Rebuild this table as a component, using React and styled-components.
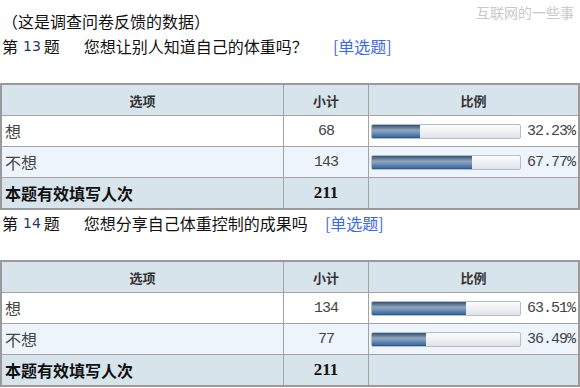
import React from "react";
import styled, { createGlobalStyle } from "styled-components";

const Global = createGlobalStyle`
  html, body { margin: 0; padding: 0; background: #fff; }
  body { font-family: "Noto Sans CJK SC", "Liberation Sans", sans-serif; }
`;

const Page = styled.div`
  position: relative;
  width: 580px;
  height: 388px;
  overflow: hidden;
  padding-top: 8px;
  box-sizing: border-box;
`;

const Watermark = styled.div`
  position: absolute;
  top: 2px;
  right: 6px;
  font-size: 14px;
  line-height: 20px;
  color: #c8c8c8;
`;

const Line = styled.div`
  display: flex;
  align-items: center;
  height: 25px;
  padding-left: 2px;
  font-size: 16px;
  color: #111;
  white-space: nowrap;
`;

const Num = styled.span`
  font-family: "DejaVu Sans", "Liberation Sans", sans-serif;
  font-size: 14px;
  color: #1f3768;
  margin: 0 3px 0 5px;
`;

const Title = styled.span`
  margin-left: 24px;
`;

const TypeLink = styled.span`
  margin-left: ${(p) => p.$gap}px;
  color: #3a67f2;
`;

const Spacer = styled.div`
  height: 25px;
`;

const Grid = styled.div`
  display: grid;
  grid-template-columns: 281px 84px 209px;
  grid-auto-rows: 30px;
  gap: 1px;
  width: 580px;
  box-sizing: border-box;
  border: 2px solid #9a9a9a;
  background: #a3a3a3;
`;

const bgFor = (k) =>
  k === "head" || k === "total" ? "#d8e4ec" : k === "alt" ? "#edf4fb" : "#ffffff";

const Cell = styled.div`
  background: ${(p) => bgFor(p.$kind)};
  display: flex;
  align-items: center;
  justify-content: ${(p) => (p.$center ? "center" : "flex-start")};
  padding: 0 2px;
  overflow: hidden;
  white-space: nowrap;
`;

const HeadText = styled.span`
  font-size: 13px;
  font-weight: bold;
  color: #333;
`;

const OptionText = styled.span`
  font-size: 16px;
  color: #444;
  padding-left: 1px;
`;

const TotalLabel = styled.span`
  font-size: 16px;
  font-weight: bold;
  color: #111;
  padding-left: 1px;
`;

const Count = styled.span`
  font-family: "Liberation Mono", "DejaVu Sans Mono", monospace;
  font-size: 15px;
  letter-spacing: -1px;
  color: #444;
`;

const TotalNum = styled.span`
  font-family: "Liberation Serif", "DejaVu Serif", serif;
  font-size: 17px;
  font-weight: bold;
  color: #111;
`;

const BarCell = styled(Cell)`
  justify-content: space-between;
  padding: 0 3px 0 2px;
`;

const Track = styled.div`
  width: 148px;
  height: 13px;
  border: 1px solid #b9bcc0;
  border-radius: 2px;
  background: linear-gradient(#fbfcfd, #eef1f4 50%, #dfe3e8);
  overflow: hidden;
  display: flex;
`;

const Fill = styled.div`
  height: 100%;
  background: linear-gradient(
    #2f5478 0%,
    #5a7797 18%,
    #93a6b9 40%,
    #7f98b3 55%,
    #4f7fb5 75%,
    #3f6fa6 90%,
    #2b4f78 100%
  );
`;

const Percent = styled.span`
  font-family: "Liberation Mono", "DejaVu Sans Mono", monospace;
  font-size: 15px;
  letter-spacing: -1px;
  color: #444;
`;

const questions = [
  {
    no: 13,
    title: "您想让别人知道自己的体重吗？",
    gap: 25,
    rows: [
      { label: "想", count: 68, pct: 32.23 },
      { label: "不想", count: 143, pct: 67.77 },
    ],
    total: 211,
  },
  {
    no: 14,
    title: "您想分享自己体重控制的成果吗",
    gap: 17,
    rows: [
      { label: "想", count: 134, pct: 63.51 },
      { label: "不想", count: 77, pct: 36.49 },
    ],
    total: 211,
  },
];

function Question({ q }) {
  return (
    <>
      <Line>
        第<Num>{q.no}</Num>题<Title>{q.title}</Title>
        <TypeLink $gap={q.gap}>[单选题]</TypeLink>
      </Line>
      <Spacer />
      <Grid>
        <Cell $kind="head" $center>
          <HeadText>选项</HeadText>
        </Cell>
        <Cell $kind="head" $center>
          <HeadText>小计</HeadText>
        </Cell>
        <Cell $kind="head" $center>
          <HeadText>比例</HeadText>
        </Cell>
        {q.rows.map((r, i) => {
          const kind = i % 2 ? "alt" : "plain";
          return (
            <React.Fragment key={r.label}>
              <Cell $kind={kind}>
                <OptionText>{r.label}</OptionText>
              </Cell>
              <Cell $kind={kind} $center>
                <Count>{r.count}</Count>
              </Cell>
              <BarCell $kind={kind}>
                <Track>
                  <Fill style={{ width: `${r.pct}%` }} />
                </Track>
                <Percent>{r.pct.toFixed(2)}%</Percent>
              </BarCell>
            </React.Fragment>
          );
        })}
        <Cell $kind="total">
          <TotalLabel>本题有效填写人次</TotalLabel>
        </Cell>
        <Cell $kind="total" $center>
          <TotalNum>{q.total}</TotalNum>
        </Cell>
        <Cell $kind="total" />
      </Grid>
    </>
  );
}

export default function App() {
  return (
    <Page>
      <Global />
      <Watermark>互联网的一些事</Watermark>
      <Line>（这是调查问卷反馈的数据）</Line>
      {questions.map((q) => (
        <Question key={q.no} q={q} />
      ))}
    </Page>
  );
}
